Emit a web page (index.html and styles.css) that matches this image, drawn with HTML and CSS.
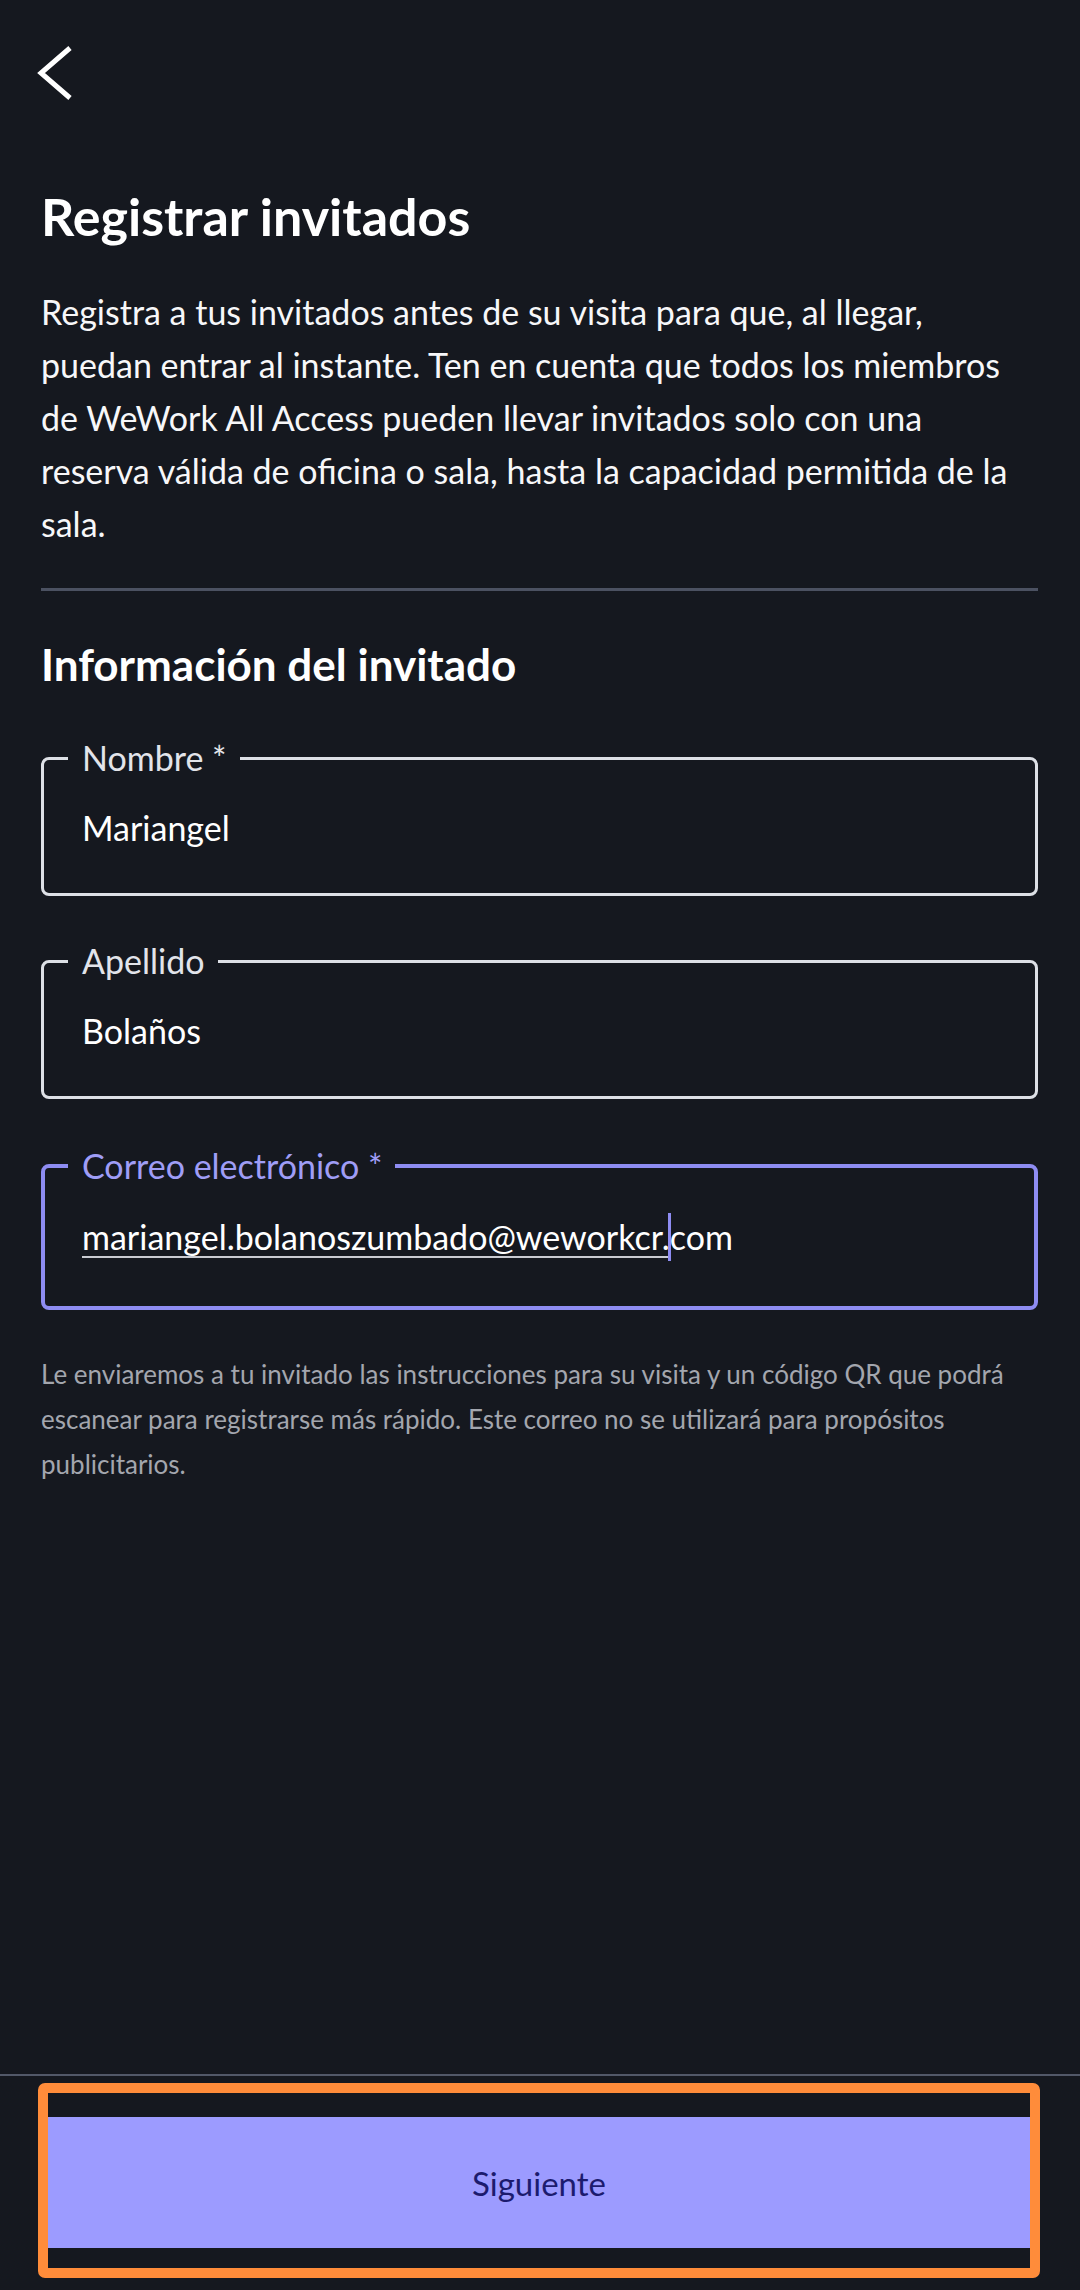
FILE: index.html
```html
<!DOCTYPE html>
<html lang="es">
<head>
<meta charset="utf-8">
<title>Registrar invitados</title>
<link rel="stylesheet" href="styles.css">
</head>
<body>
<div class="screen">
  <main class="content">
    <svg class="back" viewBox="0 0 40 60" aria-label="Atrás">
      <polyline points="34,5 5,30 34,55" fill="none" stroke="#ffffff" stroke-width="5" stroke-linejoin="miter" stroke-linecap="butt"/>
    </svg>
    <h1 class="title">Registrar invitados</h1>
    <p class="intro">Registra a tus invitados antes de su visita para que, al llegar, puedan entrar al instante. Ten en cuenta que todos los miembros de WeWork All Access pueden llevar invitados solo con una reserva válida de oficina o sala, hasta la capacidad permitida de la sala.</p>
    <hr class="divider">
    <h2 class="section">Información del invitado</h2>
    <fieldset class="field field-first">
      <legend class="label">Nombre *</legend>
      <div class="value">Mariangel</div>
    </fieldset>
    <fieldset class="field">
      <legend class="label">Apellido</legend>
      <div class="value">Bolaños</div>
    </fieldset>
    <fieldset class="field field-focus">
      <legend class="label">Correo electrónico *</legend>
      <div class="value"><span class="composing">mariangel.bolanoszumbado@weworkcr.</span><span class="cursor"></span>com</div>
    </fieldset>
    <p class="helper">Le enviaremos a tu invitado las instrucciones para su visita y un código QR que podrá escanear para registrarse más rápido. Este correo no se utilizará para propósitos publicitarios.</p>
  </main>
  <footer class="footer">
    <div class="highlight">
      <button class="primary" type="button">Siguiente</button>
    </div>
  </footer>
</div>
</body>
</html>
```

FILE: styles.css
```css
html, body {
  margin: 0;
  padding: 0;
}

body {
  background: #15181f;
  color: #ffffff;
  font-family: Lato, "Noto Sans", sans-serif;
}

.screen {
  height: 2290px;
  display: flex;
  flex-direction: column;
  overflow: hidden;
}

.content {
  flex: 1;
  padding: 0 42px 0 41px;
}

.back {
  display: block;
  width: 40px;
  height: 60px;
  margin: 43px 0 0 -5px;
}

.title {
  margin: 83px 0 0;
  font-size: 52px;
  line-height: 60px;
  font-weight: 700;
}

.intro {
  margin: 39px 0 0;
  font-size: 34px;
  line-height: 53px;
  color: #f7f7f9;
}

.divider {
  margin: 38px 0 0;
  border: 0;
  height: 3px;
  background: #4b5161;
}

.section {
  margin: 48px 0 0;
  font-size: 44px;
  line-height: 50px;
  font-weight: 700;
}

.field {
  margin: 46px 0 0;
  min-width: 0;
  border: 3px solid #dde0e6;
  border-radius: 8px;
  padding: 0 38px;
}

.field-first {
  margin-top: 50px;
}

.label {
  margin-left: -14px;
  padding: 0 13px 0 14px;
  font-size: 34px;
  line-height: 38px;
  color: #e2e4ea;
}

.value {
  padding: 32px 0 46px;
  font-size: 34px;
  line-height: 38px;
  color: #ffffff;
  white-space: nowrap;
}

.field-focus {
  margin-top: 48px;
  border: 4px solid #8e8cf2;
  padding: 0 37px;
}

.field-focus .label {
  color: #9f9df6;
}

.field-focus .value {
  padding: 28px 0 45px;
}

.composing {
  text-decoration: underline;
  text-decoration-color: #c9cbd2;
  text-decoration-thickness: 2px;
  text-underline-offset: 6px;
}

.cursor {
  display: inline-block;
  width: 3px;
  height: 48px;
  margin: 0 -1px 0 -2px;
  vertical-align: -11px;
  background: #8e8cf2;
}

.helper {
  margin: 42px 0 0;
  font-size: 26px;
  line-height: 45px;
  color: #a3a6ae;
}

.footer {
  border-top: 2px solid #525868;
  padding: 7px 0 12px;
}

.highlight {
  margin: 0 40px 0 38px;
  border: 10px solid #ff8c3a;
  border-radius: 7px;
  padding: 24px 0 20px;
}

.primary {
  display: flex;
  align-items: center;
  justify-content: center;
  width: 100%;
  height: 131px;
  margin: 0;
  border: 0;
  background: #9c9bff;
  color: #1c1b6e;
  font-family: Lato, "Noto Sans", sans-serif;
  font-size: 33px;
}
```
